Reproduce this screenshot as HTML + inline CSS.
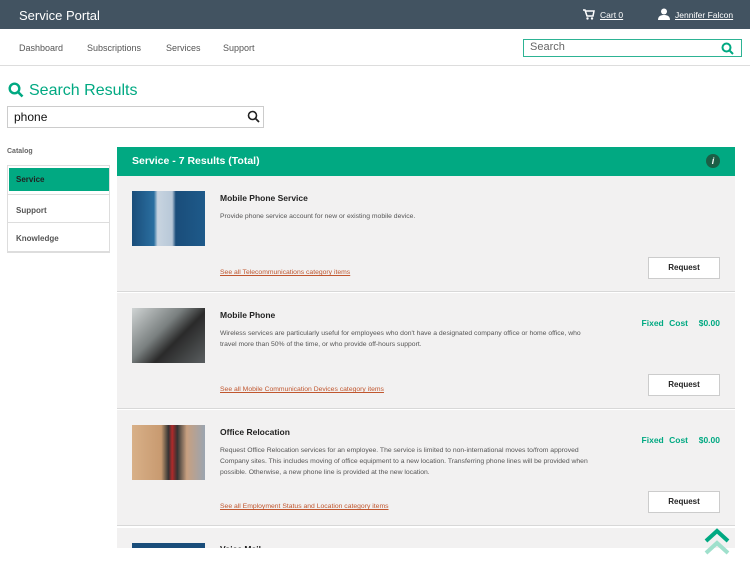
<!DOCTYPE html>
<html><head><meta charset="utf-8"><style>
*{margin:0;padding:0;box-sizing:border-box}
body{width:750px;height:563px;overflow:hidden;background:#fff;font-family:"Liberation Sans",sans-serif;position:relative}
.a{position:absolute}
.hdr{left:0;top:0;width:750px;height:29px;background:#425361}
.nav{left:0;top:29px;width:750px;height:37px;border-bottom:1px solid #ddd;background:#fff}
.nav span{position:absolute;top:14px;font-size:9px;color:#555}
.card{left:117px;width:618px;height:116px;background:#f2f1f1;border-bottom:1px solid #d8d8d8}
.img{left:15px;top:15px;width:73px;height:55px}
.t{left:103px;top:17px;font-size:8.5px;font-weight:bold;color:#222}
.d{left:103px;top:35px;font-size:6.8px;color:#555;line-height:11px;width:375px}
.l{left:103px;font-size:6.8px;color:#c0562e;text-decoration:underline}
.btn{left:531px;width:72px;height:22px;background:#fff;border:1px solid #ccc;font-size:8px;font-weight:bold;text-align:center;line-height:20px;color:#222}
.fc{right:15px;top:25px;font-size:8.5px;font-weight:bold;color:#01a982;word-spacing:3px}
.side{left:7px;width:103px;height:29px;border-bottom:1px solid #ddd;font-size:8px;font-weight:bold;color:#555;padding:11px 0 0 9px}
</style></head><body>
<div class="a hdr"></div>
<div class="a" style="left:19px;top:8px;color:#fff;font-size:13px">Service Portal</div>
<svg class="a" style="left:583px;top:9px" width="12" height="11" viewBox="0 0 12 11"><path d="M0 1h2l2 6h6l1-5H3" fill="none" stroke="#fff" stroke-width="1.5"/><circle cx="4.5" cy="9.5" r="1.2" fill="#fff"/><circle cx="9" cy="9.5" r="1.2" fill="#fff"/></svg>
<div class="a" style="left:600px;top:10px;color:#fff;font-size:8.5px;text-decoration:underline">Cart 0</div>
<svg class="a" style="left:658px;top:8px" width="12" height="12" viewBox="0 0 12 12"><circle cx="6" cy="3.5" r="3" fill="#fff"/><path d="M0 12c0-4 3-5 6-5s6 1 6 5z" fill="#fff"/></svg>
<div class="a" style="left:675px;top:10px;color:#fff;font-size:8.5px;text-decoration:underline">Jennifer Falcon</div>
<div class="a nav"><span style="left:19px">Dashboard</span><span style="left:87px">Subscriptions</span><span style="left:166px">Services</span><span style="left:223px">Support</span></div>
<div class="a" style="left:523px;top:39px;width:219px;height:18px;border:1px solid #2db394;font-size:11px;color:#666;padding:1px 6px">Search</div>
<svg class="a" style="left:721px;top:42px" width="13" height="13" viewBox="0 0 13 13"><circle cx="5.5" cy="5.5" r="4" fill="none" stroke="#01a982" stroke-width="2"/><path d="M8.5 8.5l3.5 3.5" stroke="#01a982" stroke-width="2"/></svg>
<svg class="a" style="left:8px;top:82px" width="16" height="16" viewBox="0 0 16 16"><circle cx="6.5" cy="6.5" r="4.8" fill="none" stroke="#01a982" stroke-width="2.4"/><path d="M10 10l4.5 4.5" stroke="#01a982" stroke-width="2.6"/></svg>
<div class="a" style="left:29px;top:82px;font-size:16px;color:#01a982">Search Results</div>
<div class="a" style="left:7px;top:106px;width:257px;height:22px;border:1px solid #ccc;font-size:12px;color:#111;padding:3px 6px">phone</div>
<svg class="a" style="left:247px;top:110px" width="13" height="13" viewBox="0 0 13 13"><circle cx="5.5" cy="5.5" r="4" fill="none" stroke="#222" stroke-width="1.6"/><path d="M8.5 8.5l3.5 3.5" stroke="#222" stroke-width="1.8"/></svg>
<div class="a" style="left:7px;top:148px;font-size:7px;font-weight:bold;color:#666">Catalog</div>
<div class="a" style="left:7px;top:165px;width:103px;height:88px;border:1px solid #ddd"></div>
<div class="a" style="left:9px;top:168px;width:100px;height:23px;background:#01a982;font-size:8px;font-weight:bold;color:#222;padding:7px 0 0 7px">Service</div>
<div class="a side" style="top:194px;border-top:1px solid #ddd">Support</div>
<div class="a side" style="top:223px">Knowledge</div>
<div class="a" style="left:117px;top:147px;width:618px;height:29px;background:#01a982"></div>
<div class="a" style="left:132px;top:155px;font-size:10.5px;font-weight:bold;color:#fff">Service - 7 Results (Total)</div>
<div class="a" style="left:706px;top:154px;width:14px;height:14px;border-radius:50%;background:#1b5e46;color:#fff;font-size:9px;font-weight:bold;text-align:center;line-height:14px;font-style:italic">i</div>

<div class="a card" style="top:176px">
<div class="a img" style="background:linear-gradient(90deg,#1a4d7a,#2a6fa0 30%,#c8d4e0 35%,#b8c8d8 55%,#1a4d7a 60%,#1e5a8a)"></div>
<div class="a t">Mobile Phone Service</div>
<div class="a d">Provide phone service account for new or existing mobile device.</div>
<div class="a l" style="top:93px">See all Telecommunications category items</div>
<div class="a btn" style="top:81px">Request</div></div>

<div class="a card" style="top:293px">
<div class="a img" style="background:linear-gradient(135deg,#d0d4d4,#7a8080 40%,#2a2a2a 60%,#5a5e60)"></div>
<div class="a t">Mobile Phone</div>
<div class="a fc">Fixed Cost &nbsp;$0.00</div>
<div class="a d">Wireless services are particularly useful for employees who don't have a designated company office or home office, who travel more than 50% of the time, or who provide off-hours support.</div>
<div class="a l" style="top:93px">See all Mobile Communication Devices category items</div>
<div class="a btn" style="top:81px">Request</div></div>

<div class="a card" style="top:410px">
<div class="a img" style="background:linear-gradient(90deg,#d8b088,#c89a70 40%,#333 50%,#b02a2a 55%,#333 62%,#c8a080 75%,#9aa4b0)"></div>
<div class="a t">Office Relocation</div>
<div class="a fc">Fixed Cost &nbsp;$0.00</div>
<div class="a d">Request Office Relocation services for an employee. The service is limited to non-international moves to/from approved Company sites. This includes moving of office equipment to a new location. Transferring phone lines will be provided when possible. Otherwise, a new phone line is provided at the new location.</div>
<div class="a l" style="top:93px">See all Employment Status and Location category items</div>
<div class="a btn" style="top:81px">Request</div></div>

<div class="a" style="left:117px;top:528px;width:618px;height:20px;background:#f2f1f1;overflow:hidden">
<div class="a" style="left:15px;top:15px;width:73px;height:10px;background:#1a4d7a"></div>
<div class="a" style="left:103px;top:16px;font-size:8.5px;font-weight:bold;color:#222">Voice Mail</div></div>
<div class="a" style="left:0;top:548px;width:750px;height:15px;background:#fff"></div>
<svg class="a" style="left:703px;top:527px" width="28" height="30" viewBox="0 0 28 30"><path d="M3 14L14 4l11 10" fill="none" stroke="#01a982" stroke-width="4"/><path d="M3 26L14 16l11 10" fill="none" stroke="#9fe0cc" stroke-width="4"/></svg>
</body></html>
